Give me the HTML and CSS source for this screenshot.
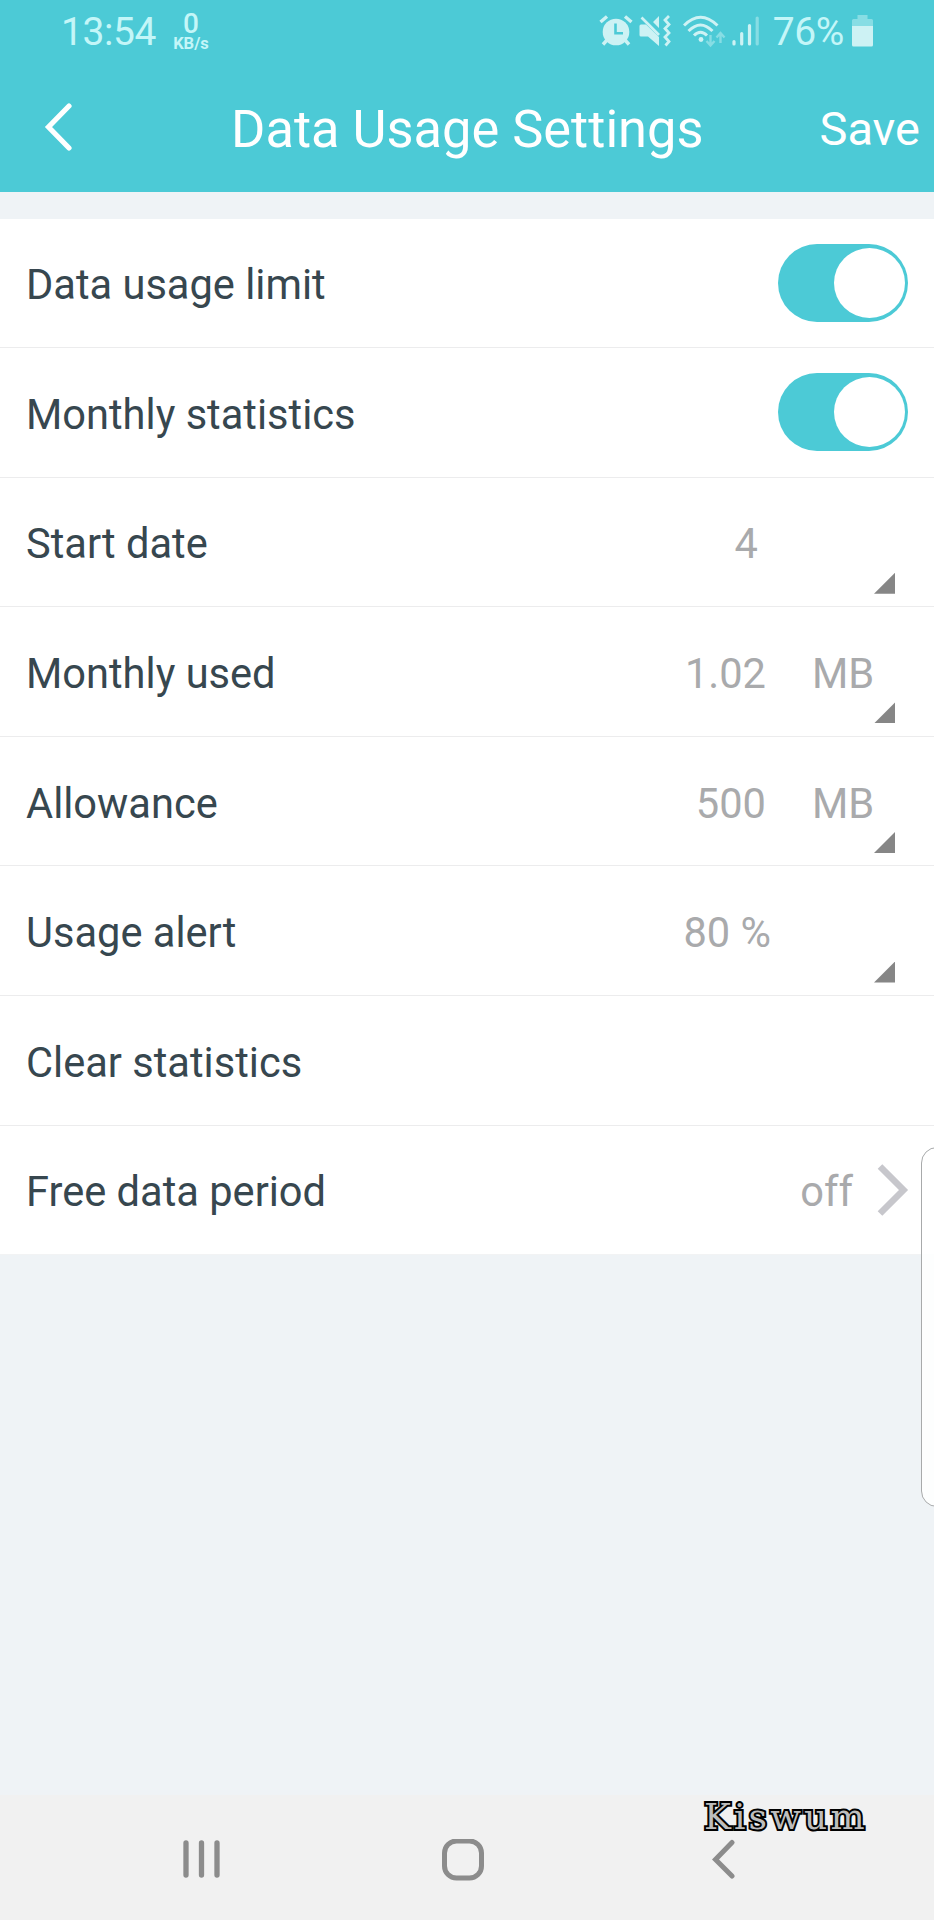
FILE: index.html
```html
<!DOCTYPE html>
<html lang="en">
<head>
    <meta charset="UTF-8" />
    <title>Data Usage Settings</title>
    <link rel="stylesheet" href="styles.css">
</head>
<body>

<div class="screen">
    <header class="header">
        <div class="status-bar">
            <span class="clock">13:54</span>
            <div class="net-speed">
                <span class="speed">0</span>
                <span class="speed-unit">KB/s</span>
            </div>
            <div class="status-icons">
                <!-- alarm -->
                <svg class="icon-alarm" width="34" height="32" viewBox="0 0 34 32">
                    <path d="M1.5 7 L8 1.5 M26 1.5 L32.5 7 M8 25 L4 29.5 M26 25 L30 29.5" stroke="#cdf2f4" stroke-width="3.4" fill="none"/>
                    <circle cx="17" cy="17" r="13.3" fill="#cdf2f4"/>
                    <path d="M16.5 8.5 V18.2 H24" stroke="#4ccad6" stroke-width="2.6" fill="none"/>
                </svg>
                <!-- muted / vibrate -->
                <svg class="icon-mute" width="32" height="32" viewBox="0 0 32 32">
                    <path d="M0.5 11 Q0.5 9.5 2 9.5 H7 L20 22 V31 L9 21.5 H2 Q0.5 21.5 0.5 20 Z M14 7 L20 1 V13 Z" fill="#cdf2f4"/>
                    <path d="M2.5 2.5 L20 20" stroke="#cdf2f4" stroke-width="2.6"/>
                    <path d="M30 1 L26 5 L30 9.5 L26 13.5 L30 18 L26 22 L30 26.5 L26.5 30.5" stroke="#cdf2f4" stroke-width="2.8" fill="none"/>
                </svg>
                <!-- wifi -->
                <svg class="icon-wifi" width="43" height="33" viewBox="0 0 43 33">
                    <path d="M1 10.5 Q17.5 -6 34.5 10.5 M5.5 16 Q17.5 4 29.5 16 M11 20.5 Q17.5 14 24 20.5" stroke="#cdf2f4" stroke-width="3" fill="none"/>
                    <circle cx="18" cy="24.5" r="2.4" fill="#cdf2f4"/>
                    <path d="M27.5 20 V30 M23.5 26 L27.5 30.5 L31.5 26 M37.5 28 V18 M33.5 22.5 L37.5 18 L41.5 22.5" stroke="#87dde4" stroke-width="2.4" fill="none"/>
                </svg>
                <!-- mobile signal -->
                <svg class="icon-signal" width="28" height="32" viewBox="0 0 28 32">
                    <g stroke-width="3.2" stroke-linecap="round">
                        <path d="M2 26.5 V29 M9.7 18.5 V29 M17.5 10.5 V29" stroke="#cdf2f4"/>
                        <path d="M25.2 3 V29" stroke="#87dde4"/>
                    </g>
                </svg>
                <span class="battery-level">76%</span>
                <!-- battery -->
                <svg class="icon-battery" width="21" height="32" viewBox="0 0 21 32">
                    <path d="M5.5 0 H15.5 V4 H19.5 Q21 4 21 5.5 V12 H0 V5.5 Q0 4 1.5 4 H5.5 Z" fill="#87dde4"/>
                    <path d="M0 11 H21 V30 Q21 31.5 19.5 31.5 H1.5 Q0 31.5 0 30 Z" fill="#cdf2f4"/>
                </svg>
            </div>
        </div>
        <div class="title-bar">
            <svg class="back" width="28" height="48" viewBox="0 0 28 48">
                <path d="M25 3 L4.5 24 L25 45" stroke="#fff" stroke-width="5.2" stroke-linecap="round" fill="none"/>
            </svg>
            <h1 class="title">Data Usage Settings</h1>
            <span class="save">Save</span>
        </div>
    </header>

    <main class="settings">
        <div class="row">
            <span class="label">Data usage limit</span>
            <div class="toggle"><div class="knob"></div></div>
        </div>
        <div class="row">
            <span class="label">Monthly statistics</span>
            <div class="toggle"><div class="knob"></div></div>
        </div>
        <div class="row">
            <span class="label">Start date</span>
            <span class="value value-date">4</span>
            <div class="corner"></div>
        </div>
        <div class="row">
            <span class="label">Monthly used</span>
            <span class="value">1.02</span>
            <span class="unit">MB</span>
            <div class="corner"></div>
        </div>
        <div class="row">
            <span class="label">Allowance</span>
            <span class="value">500</span>
            <span class="unit">MB</span>
            <div class="corner"></div>
        </div>
        <div class="row">
            <span class="label">Usage alert</span>
            <span class="value value-alert">80 %</span>
            <div class="corner"></div>
        </div>
        <div class="row">
            <span class="label">Clear statistics</span>
        </div>
        <div class="row">
            <span class="label">Free data period</span>
            <span class="value value-link">off</span>
            <svg class="chevron" width="32" height="52" viewBox="0 0 32 52">
                <path d="M3 2.5 L26.5 26 L3 49.5" stroke="#c7c7cc" stroke-width="6.5" fill="none"/>
            </svg>
        </div>
    </main>

    <nav class="nav-bar">
        <svg class="nav-recent" width="38" height="42" viewBox="0 0 38 42">
            <path d="M3 4 V36 M18.5 4 V36 M34 4 V36" stroke="#8c8c8c" stroke-width="5.3" stroke-linecap="round"/>
        </svg>
        <svg class="nav-home" width="42" height="42" viewBox="0 0 42 42">
            <rect x="2.500" y="2" width="37" height="37" rx="12" stroke="#8c8c8c" stroke-width="5" fill="none"/>
        </svg>
        <svg class="nav-back" width="24" height="42" viewBox="0 0 24 42">
            <path d="M20 3.500 L3.500 20.500 L20 37" stroke="#8c8c8c" stroke-width="5" stroke-linecap="round" fill="none"/>
        </svg>
    </nav>

    <div class="edge-panel"></div>
    <div class="watermark">Kiswum</div>
</div>

</body>
</html>
```

FILE: styles.css
```css
* {
    box-sizing: border-box;
}
body {
    margin: 0;
    font-family: Roboto, sans-serif;
    background-color: #eff3f6;
}
svg {
    display: block;
    flex-shrink: 0;
}
.screen {
    position: relative;
    display: flex;
    flex-direction: column;
    width: 934px;
    height: 1920px;
    overflow: hidden;
}

/* Header */
.header {
    height: 191.5px;
    background-color: #4ccad6;
    color: white;
}
.status-bar {
    display: flex;
    height: 64px;
    padding: 0 61px 0 61px;
    color: #c4f6f8;
}
.clock {
    font-size: 39px;
    line-height: 65px;
    letter-spacing: -0.4px;
}
.net-speed {
    display: flex;
    flex-direction: column;
    align-items: center;
    margin-left: 17px;
    padding-top: 10px;
    font-weight: bold;
}
.speed {
    font-size: 28px;
    font-weight: 500;
    line-height: 28px;
}
.speed-unit {
    font-size: 16.5px;
    line-height: 11px;
}
.status-icons {
    display: flex;
    margin-left: auto;
    padding-top: 15px;
}
.icon-mute {
    margin-left: 6px;
}
.icon-wifi {
    margin-left: 12px;
}
.icon-signal {
    margin-left: 6px;
}
.battery-level {
    margin-left: 13px;
    font-size: 39px;
    line-height: 35px;
    letter-spacing: -0.4px;
}
.icon-battery {
    margin-left: 8px;
}
.title-bar {
    display: flex;
    align-items: center;
    height: 127px;
    padding: 2px 14px 0 44px;
}
.back {
    margin-top: -3px;
}
.title {
    margin: 0 0 0 159px;
    font-size: 52.4px;
    font-weight: normal;
    line-height: 64px;
}
.save {
    margin-left: auto;
    font-size: 47px;
    line-height: 64px;
}

/* Settings list */
.settings {
    margin-top: 27px;
}
.row {
    display: flex;
    align-items: center;
    height: 129.6px;
    border-bottom: 1px solid #ececed;
    background-color: white;
    font-size: 41.6px;
}
.row:last-child {
    border-bottom-color: #f2f3f4;
}
.label {
    margin-right: auto;
    padding: 4px 0 0 26px;
    color: #37474f;
}
.value,
.unit {
    padding-top: 4px;
    color: #a9aaac;
}
.value {
    margin-right: 46px;
}
.value-date {
    margin-right: 116px;
}
.value-alert {
    margin-right: 103px;
}
.value-link {
    margin-right: 24px;
}
.unit {
    width: 62px;
}
.corner {
    align-self: flex-end;
    width: 21px;
    height: 21px;
    margin: 0 39px 12.5px 0;
    background-color: #868686;
    clip-path: polygon(100% 0, 100% 100%, 0 100%);
}
.toggle {
    display: flex;
    justify-content: flex-end;
    width: 130px;
    height: 78px;
    margin-right: 26px;
    padding: 4px 3px;
    border-radius: 39px;
    background-color: #4ccad6;
}
.knob {
    width: 71px;
    height: 70px;
    border-radius: 50%;
    background-color: white;
}
.chevron {
    margin-right: 25px;
}

/* Navigation bar */
.nav-bar {
    display: flex;
    align-items: flex-start;
    height: 125.5px;
    margin-top: auto;
    padding: 44px 0 0 183px;
    background-color: #f1f1f1;
}
.nav-home {
    margin-left: 221px;
}
.nav-back {
    margin-left: 228px;
}

/* Overlays */
.edge-panel {
    position: absolute;
    top: 1147px;
    right: -20px;
    width: 33px;
    height: 360px;
    border: 1.5px solid #a8aaab;
    border-radius: 16px;
    background-color: rgba(255, 255, 255, 0.85);
}
.watermark {
    position: absolute;
    top: 1796px;
    left: 704px;
    color: #bdbdbd;
    font-family: "DejaVu Serif", serif;
    font-size: 36px;
    line-height: 42px;
    letter-spacing: 3.1px;
    -webkit-text-stroke: 4px black;
    paint-order: stroke fill;
}
```
